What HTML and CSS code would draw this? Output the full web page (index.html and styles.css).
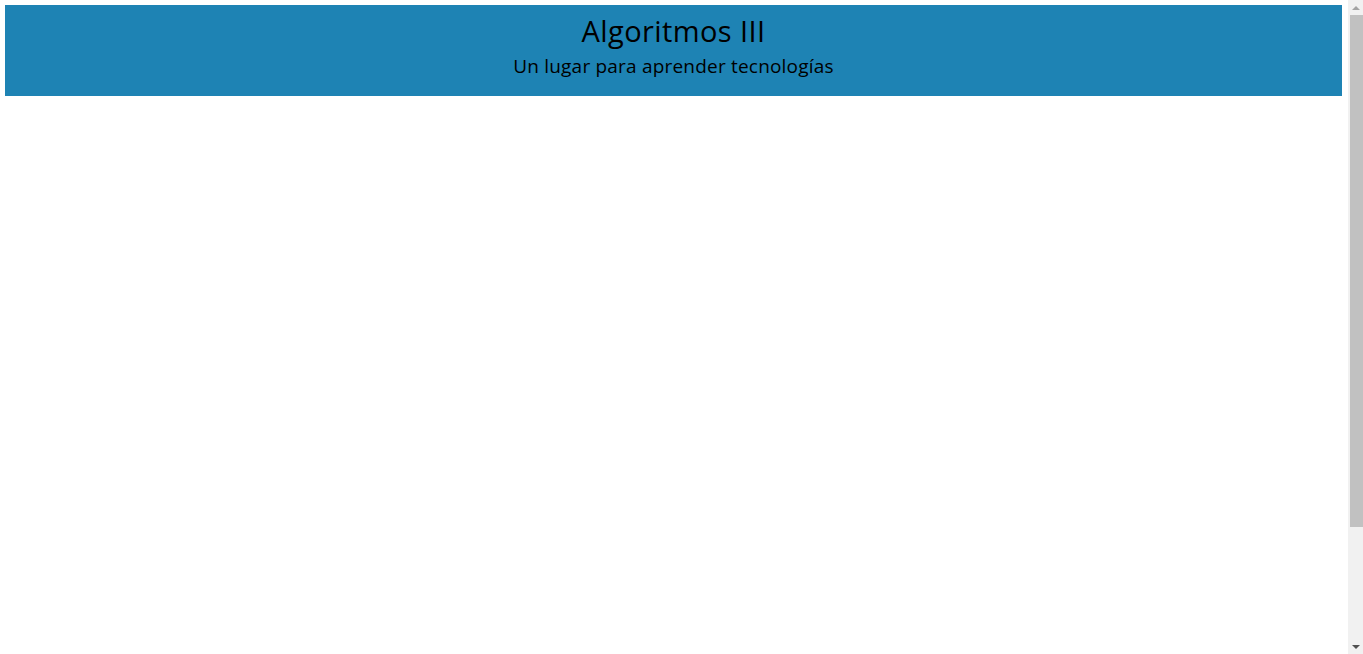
FILE: index.html
```html
<!DOCTYPE html>
<html lang="es">
<head>
<meta charset="utf-8">
<title>Algoritmos III</title>
<link rel="stylesheet" href="styles.css">
</head>
<body>
<header class="hero">
  <h1 class="hero-title">Algoritmos III</h1>
  <p class="hero-sub">Un lugar para aprender tecnologías</p>
</header>
<main class="content"></main>
<div class="scrollbar" aria-hidden="true">
  <div class="sb-btn"><span class="sb-arrow sb-up"></span></div>
  <div class="sb-track"><div class="sb-thumb"></div></div>
  <div class="sb-btn"><span class="sb-arrow sb-down"></span></div>
</div>
</body>
</html>
```
FILE: styles.css
```css
html {
  background: #ffffff;
}
body {
  margin: 5px 21px 5px 5px;
  font-family: "Open Sans", "DejaVu Sans", sans-serif;
  color: #000;
}
.hero {
  background: #1e83b4;
  height: 91px;
  box-sizing: border-box;
  padding-top: 9px;
  text-align: center;
}
.hero-title {
  margin: 0;
  font-size: 29px;
  font-weight: 500;
  line-height: 34px;
  letter-spacing: 0.4px;
}
.hero-sub {
  margin: 0;
  margin-top: 5px;
  font-size: 19px;
  line-height: 26px;
  letter-spacing: 0.2px;
}
.scrollbar {
  position: fixed;
  top: 0;
  right: 0;
  width: 15px;
  height: 100vh;
  background: #f1f1f1;
  display: flex;
  flex-direction: column;
}
.sb-btn {
  height: 15px;
  flex: none;
  display: flex;
  align-items: center;
  justify-content: center;
  padding-left: 1px;
}
.sb-track {
  flex: 1;
  padding-left: 2px;
}
.sb-thumb {
  height: 512px;
  background: #c1c1c1;
}
.sb-arrow {
  width: 0;
  height: 0;
  border-left: 4px solid transparent;
  border-right: 4px solid transparent;
}
.sb-up {
  border-bottom: 4px solid #a3a3a3;
}
.sb-down {
  border-top: 4px solid #505050;
}
```
